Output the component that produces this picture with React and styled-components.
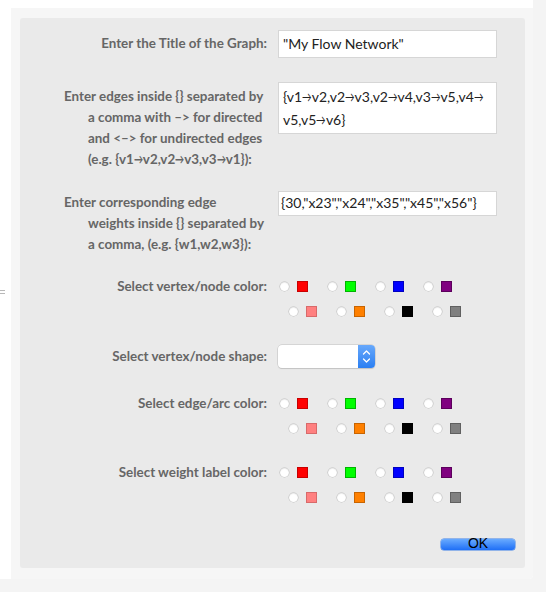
import React from "react";
import styled, { createGlobalStyle } from "styled-components";

const Global = createGlobalStyle`
  html, body { margin: 0; padding: 0; }
  body {
    background: #f4f4f4;
    font-family: "Lato", "Noto Sans", sans-serif;
  }
`;

const Page = styled.div`
  width: 546px;
  height: 592px;
  background: #f4f4f4;
  overflow: hidden;
`;

const Window = styled.div`
  width: 533px;
  height: 579px;
  background: #ffffff;
  display: flex;
  border-bottom-right-radius: 4px;
`;

const Gutter = styled.div`
  width: 11px;
  display: flex;
  align-items: center;
`;

const Mark = styled.div`
  width: 5px;
  height: 4px;
  border-top: 1px solid #b8b8b8;
  border-bottom: 1px solid #b8b8b8;
  box-sizing: border-box;
  margin-top: 4px;
`;

const Outer = styled.div`
  flex: 1;
  margin-top: 8px;
  background: #f6f6f6;
  padding: 10px 8px 11px 9px;
  box-sizing: border-box;
  border-bottom-right-radius: 4px;
`;

const Panel = styled.div`
  background: #eaeaea;
  border-radius: 3px;
  height: 550px;
  box-sizing: border-box;
  padding: 12px 10px 0 0;
  display: flex;
  flex-direction: column;
`;

const Row = styled.div`
  display: grid;
  grid-template-columns: 247px 1fr;
  column-gap: 11px;
  margin-top: ${(p) => p.$gap || 0}px;
  align-items: start;
`;

const Label = styled.div`
  justify-self: end;
  font-family: "Lato", "Noto Sans", sans-serif;
  font-weight: 700;
  font-size: 13.4px;
  line-height: 21px;
  color: #666666;
  white-space: nowrap;
  text-align: ${(p) => (p.$hanging ? "left" : "right")};
  width: ${(p) => (p.$hanging ? "179px" : "auto")};
  padding-left: ${(p) => (p.$hanging ? "24px" : "0")};
  text-indent: ${(p) => (p.$hanging ? "-24px" : "0")};
  padding-top: ${(p) => p.$top || 0}px;
`;

const Arrow = styled.span`
  display: inline-block;
  width: 0.68em;
  text-indent: 0;
  overflow: visible;
  transform: scaleX(0.68);
  transform-origin: left center;
`;

const Field = styled.div`
  width: 219px;
  min-height: ${(p) => p.$h}px;
  box-sizing: border-box;
  background: #ffffff;
  border: 1px solid #d6d6d6;
  padding: ${(p) => p.$pad || "3px 4px"};
  font-family: "Lato", "Noto Sans", sans-serif;
  font-size: 14px;
  line-height: ${(p) => p.$lh || 20}px;
  color: #222222;
  white-space: nowrap;
`;

const Swatches = styled.div`
  display: flex;
  flex-direction: column;
`;

const SwatchRow = styled.div`
  display: flex;
  align-items: center;
  height: 25px;
  gap: 18px;
  padding-left: ${(p) => p.$indent}px;
`;

const Option = styled.div`
  display: flex;
  align-items: center;
  gap: 8px;
`;

const Radio = styled.span`
  width: 9px;
  height: 9px;
  border-radius: 50%;
  background: #ffffff;
  box-shadow: 0 0 0 0.5px #bdbdbd, inset 0 1px 1px rgba(0, 0, 0, 0.08);
  margin-left: 2px;
`;

const Swatch = styled.span`
  width: 11px;
  height: 11px;
  box-sizing: border-box;
  background: ${(p) => p.$c};
  border: 1px solid ${(p) => p.$b};
`;

const Select = styled.div`
  width: 97px;
  height: 23px;
  box-sizing: border-box;
  display: flex;
  border-radius: 4px;
  background: #ffffff;
  box-shadow: 0 0 0 0.5px #c0c0c0, 0 1px 1px rgba(0, 0, 0, 0.15);
  overflow: hidden;
`;

const SelectBody = styled.div`
  flex: 1;
`;

const Stepper = styled.div`
  width: 17px;
  background: linear-gradient(#67a8fb, #2b7ff2);
  display: flex;
  align-items: center;
  justify-content: center;
`;

const Footer = styled.div`
  display: flex;
  justify-content: flex-end;
  margin-top: ${(p) => p.$gap}px;
`;

const OkButton = styled.div`
  width: 74px;
  height: 11px;
  border-radius: 3px;
  background: linear-gradient(#69abff, #1f6ff6);
  box-shadow: 0 0 0 0.5px #3a7ee8;
  font-family: "Liberation Sans", Arial, sans-serif;
  font-size: 14px;
  line-height: 8px;
  text-align: center;
  color: #000000;
`;

const COLORS = [
  ["#ff0000", "#c80000"],
  ["#00ff00", "#00b400"],
  ["#0000ff", "#0000c0"],
  ["#800080", "#5c005c"],
  ["#ff8080", "#d86a6a"],
  ["#ff8000", "#c86400"],
  ["#000000", "#000000"],
  ["#808080", "#606060"],
];

function withArrows(text) {
  const parts = text.split("→");
  const out = [];
  parts.forEach((p, i) => {
    out.push(p);
    if (i < parts.length - 1) out.push(<Arrow key={i}>→</Arrow>);
  });
  return out;
}

function ColorPicker() {
  return (
    <Swatches>
      <SwatchRow $indent={0}>
        {COLORS.slice(0, 4).map(([c, b]) => (
          <Option key={c}>
            <Radio />
            <Swatch $c={c} $b={b} />
          </Option>
        ))}
      </SwatchRow>
      <SwatchRow $indent={9}>
        {COLORS.slice(4).map(([c, b]) => (
          <Option key={c}>
            <Radio />
            <Swatch $c={c} $b={b} />
          </Option>
        ))}
      </SwatchRow>
    </Swatches>
  );
}

export default function App() {
  return (
    <Page>
      <Global />
      <Window>
        <Gutter>
          <Mark />
        </Gutter>
        <Outer>
          <Panel>
            <Row $gap={0}>
              <Label $top={3}>Enter the Title of the Graph:</Label>
              <Field $h={27}>"My Flow Network"</Field>
            </Row>
            <Row $gap={24}>
              <Label $hanging $top={4}>
                Enter edges inside {"{}"} separated by
                <br />a comma with –&gt; for directed
                <br />and &lt;–&gt; for undirected edges
                <br />(e.g. {withArrows("{v1→v2,v2→v3,v3→v1}")}):
              </Label>
              <Field $h={49} $lh={23} $pad="2px 4px">
                {withArrows("{v1→v2,v2→v3,v2→v4,v3→v5,v4→")}
                <br />
                {withArrows("v5,v5→v6}")}
              </Field>
            </Row>
            <Row $gap={21}>
              <Label $hanging $top={1}>
                Enter corresponding edge
                <br />weights inside {"{}"} separated by
                <br />a comma, (e.g. {"{w1,w2,w3}"}):
              </Label>
              <Field $h={25} $pad="1px 2px">
                {'{30,"x23","x24","x35","x45","x56"}'}
              </Field>
            </Row>
            <Row $gap={19}>
              <Label $top={2}>Select vertex/node color:</Label>
              <ColorPicker />
            </Row>
            <Row $gap={21}>
              <Label $top={1}>Select vertex/node shape:</Label>
              <Select>
                <SelectBody />
                <Stepper>
                  <svg width="9" height="15" viewBox="0 0 9 15" fill="none">
                    <path d="M1.5 5 L4.5 2 L7.5 5" stroke="#fff" strokeWidth="1.3" strokeLinecap="round" strokeLinejoin="round" />
                    <path d="M1.5 10 L4.5 13 L7.5 10" stroke="#fff" strokeWidth="1.3" strokeLinecap="round" strokeLinejoin="round" />
                  </svg>
                </Stepper>
              </Select>
            </Row>
            <Row $gap={23}>
              <Label $top={2}>Select edge/arc color:</Label>
              <ColorPicker />
            </Row>
            <Row $gap={19}>
              <Label $top={2}>Select weight label color:</Label>
              <ColorPicker />
            </Row>
            <Footer $gap={29}>
              <OkButton>OK</OkButton>
            </Footer>
          </Panel>
        </Outer>
      </Window>
    </Page>
  );
}
